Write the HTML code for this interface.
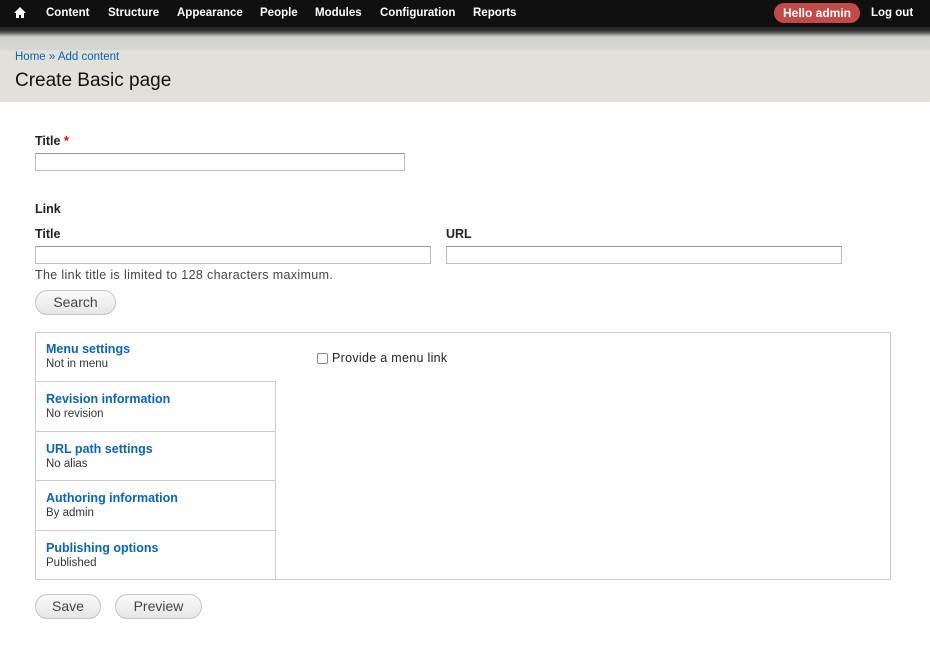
<!DOCTYPE html>
<html><head><meta charset="utf-8"><style>
*{box-sizing:border-box;margin:0;padding:0}
body{width:930px;height:667px;overflow:hidden;background:#fefefe;font-family:"Liberation Sans",sans-serif;color:#333;position:relative}
.bar{position:absolute;left:0;top:0;width:930px;height:27px;background:#101010}
.grad{position:absolute;left:0;top:27px;width:930px;height:23px;background:linear-gradient(#2b2b2b 0,#2b2b2b 3px,#666 6px,#bbb 9px,#d4d4ce 11px,#d6d6d0 100%)}
.nav a{position:absolute;top:7px;color:#fff;font-weight:bold;font-size:11.5px;text-decoration:none}
.hello{position:absolute;left:774px;top:3px;width:86px;height:20px;border-radius:10px;background:#c24a48;color:#fff;font-weight:bold;font-size:12px;text-align:center;line-height:20px}
.head{position:absolute;left:0;top:50px;width:930px;height:52px;background:#e1e1d9}
.bc{position:absolute;left:15px;top:51px;font-size:11.5px;color:#0a63b3}
h1{position:absolute;left:15px;top:70px;font-size:19px;font-weight:normal;color:#111}
.lbl{position:absolute;font-weight:bold;font-size:12.5px;color:#222}
.inp{position:absolute;border:1px solid #bcbcb6;border-top-color:#999;background:#fff;height:18px}
.btn{position:absolute;height:25px;border:1px solid #c5c5c5;border-radius:13px;background:linear-gradient(#fafafa,#e6e6e6);font-size:14px;color:#444;text-align:center;line-height:23px}
.vt{position:absolute;left:35px;top:332px;width:856px;height:248px;border:1px solid #ccc;background:#fff}
.tab{position:absolute;left:0;width:240px;border-top:1px solid #ccc;border-right:1px solid #ccc;padding:10px 10px 0;height:50px}
.tab b{display:block;color:#0a63b3;font-size:12.5px}
.tab span{display:block;font-size:11.5px;color:#333;margin-top:2px}
</style></head><body>
<div class="bar"></div><div class="grad"></div>
<div class="nav">
<svg style="position:absolute;left:14px;top:7px" width="12" height="11" viewBox="0 0 12 11"><path d="M6 0L0 6h2v5h3V8h2v3h3V6h2z" fill="#fff"/></svg>
<a style="left:46px">Content</a><a style="left:108px">Structure</a><a style="left:177px">Appearance</a><a style="left:260px">People</a><a style="left:315px">Modules</a><a style="left:380px">Configuration</a><a style="left:473px">Reports</a><a style="left:871px">Log out</a>
</div>
<div class="hello">Hello admin</div>
<div class="head"></div>
<div class="bc">Home » Add content</div>
<h1>Create Basic page</h1>
<div class="lbl" style="left:35px;top:134px">Title <span style="color:#e00">*</span></div>
<div class="inp" style="left:35px;top:153px;width:370px"></div>
<div class="lbl" style="left:35px;top:202px">Link</div>
<div class="lbl" style="left:35px;top:227px">Title</div>
<div class="lbl" style="left:446px;top:227px">URL</div>
<div class="inp" style="left:35px;top:246px;width:396px"></div>
<div class="inp" style="left:446px;top:246px;width:396px"></div>
<div style="position:absolute;left:35px;top:268px;font-size:12.5px;letter-spacing:0.35px;color:#444">The link title is limited to 128 characters maximum.</div>
<div class="btn" style="left:35px;top:290px;width:81px">Search</div>
<div class="vt">
<div class="tab" style="top:-1px;border-top:none;border-right:none;"><b>Menu settings</b><span>Not in menu</span></div>
<div class="tab" style="top:48px"><b>Revision information</b><span>No revision</span></div>
<div class="tab" style="top:98px"><b>URL path settings</b><span>No alias</span></div>
<div class="tab" style="top:147px"><b>Authoring information</b><span>By admin</span></div>
<div class="tab" style="top:197px;height:50px"><b>Publishing options</b><span>Published</span></div>
<div style="position:absolute;left:281px;top:20px;width:11px;height:11px;border:1px solid #888;border-radius:2px"></div>
<div style="position:absolute;left:296px;top:18px;font-size:12.5px;letter-spacing:0.3px;color:#222">Provide a menu link</div>
</div>
<div class="btn" style="left:35px;top:594px;width:66px">Save</div>
<div class="btn" style="left:115px;top:594px;width:87px">Preview</div>
</body></html>
